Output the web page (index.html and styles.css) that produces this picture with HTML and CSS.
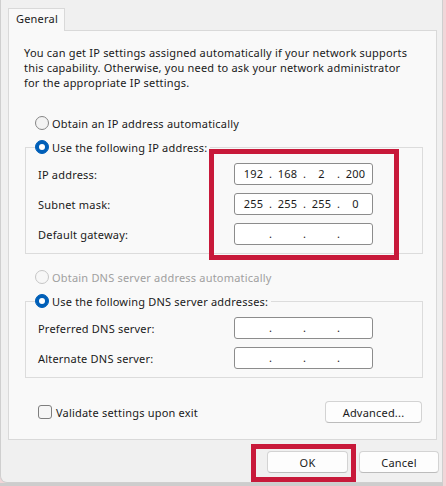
FILE: index.html
```html
<!DOCTYPE html>
<html lang="en">
<head>
<meta charset="utf-8">
<title>Internet Protocol Version 4 (TCP/IPv4) Properties</title>
<link rel="stylesheet" href="styles.css">
</head>
<body>
<div class="screen">
  <div class="window">
    <div class="dialog">
      <div class="tabs"><div class="tab">General</div></div>
      <div class="panel">
        <p class="intro">You can get IP settings assigned automatically if your network supports<br>this capability. Otherwise, you need to ask your network administrator<br>for the appropriate IP settings.</p>

        <div class="option first"><span class="radio"></span>Obtain an IP address automatically</div>

        <div class="group">
          <div class="group-head"><span class="radio on"></span>Use the following IP address:</div>
          <div class="field">
            <span class="label">IP address:</span>
            <span class="ip"><span>192</span><i>.</i><span>168</span><i>.</i><span>2</span><i>.</i><span>200</span></span>
          </div>
          <div class="field">
            <span class="label">Subnet mask:</span>
            <span class="ip"><span>255</span><i>.</i><span>255</span><i>.</i><span>255</span><i>.</i><span>0</span></span>
          </div>
          <div class="field">
            <span class="label">Default gateway:</span>
            <span class="ip"><span></span><i>.</i><span></span><i>.</i><span></span><i>.</i><span></span></span>
          </div>
        </div>

        <div class="option dns-auto disabled"><span class="radio"></span>Obtain DNS server address automatically</div>

        <div class="group dns">
          <div class="group-head"><span class="radio on"></span>Use the following DNS server addresses:</div>
          <div class="field">
            <span class="label">Preferred DNS server:</span>
            <span class="ip"><span></span><i>.</i><span></span><i>.</i><span></span><i>.</i><span></span></span>
          </div>
          <div class="field">
            <span class="label">Alternate DNS server:</span>
            <span class="ip"><span></span><i>.</i><span></span><i>.</i><span></span><i>.</i><span></span></span>
          </div>
        </div>

        <div class="bottom-row">
          <div class="check"><span class="box"></span>Validate settings upon exit</div>
          <button class="btn advanced">Advanced...</button>
        </div>
      </div>

      <div class="actions">
        <button class="btn ok">OK</button>
        <button class="btn cancel">Cancel</button>
      </div>
    </div>
    <div class="under"></div>
  </div>
  <div class="edge"></div>
</div>

<div class="mark mark-ip"></div>
<div class="mark mark-ok"></div>
</body>
</html>
```

FILE: styles.css
```css
* {
  box-sizing: border-box;
}

html,
body {
  margin: 0;
}

body {
  position: relative;
  width: 446px;
  height: 486px;
  overflow: hidden;
  font: 11px/15px "Noto Sans", sans-serif;
  letter-spacing: 0.2px;
  color: #1a1a1a;
  background: #f2d6d9;
}

.screen {
  display: flex;
  height: 486px;
}

.window {
  width: 443px;
  display: flex;
  flex-direction: column;
}

.dialog {
  height: 483px;
  background: #f0f0f0;
  border: 1px solid #cfcfcf;
  border-top: 0;
  border-bottom-left-radius: 7px;
  padding: 8px 0 0 7px;
}

.under {
  flex: 1;
  background: #cdcdcd;
}

.edge {
  flex: 1;
  background: #f2d6d9;
}

/* tab strip */
.tabs {
  display: flex;
}

.tab {
  position: relative;
  z-index: 1;
  width: 57px;
  height: 23px;
  margin-bottom: -1px;
  padding-left: 7px;
  border: 1px solid #d9d9d9;
  border-bottom: 0;
  background: #f9f9f9;
  line-height: 19px;
}

.panel {
  width: 429px;
  height: 410px;
  border: 1px solid #d9d9d9;
  background: #f9f9f9;
  padding: 14px 13px 0 15px;
}

.intro {
  margin: 0;
  white-space: nowrap;
}

/* radio options */
.option,
.group-head {
  display: flex;
  align-items: center;
  gap: 3px;
  height: 16px;
  white-space: nowrap;
}

.option {
  margin-left: 11px;
}

.option.first {
  margin-top: 25px;
}

.option.dns-auto {
  margin-top: 15px;
}

.disabled {
  color: #a0a0a0;
}

.radio {
  flex: none;
  position: relative;
  width: 14px;
  height: 14px;
  border-radius: 50%;
  border: 1px solid #858585;
  background: #f3f3f3;
}

.disabled .radio {
  border-color: #c6c6c6;
  background: #f7f7f7;
}

.radio.on {
  border-color: #005fb8;
  background: #005fb8;
}

.radio.on::after {
  content: "";
  position: absolute;
  left: 3px;
  top: 3px;
  width: 6px;
  height: 6px;
  border-radius: 50%;
  background: #fff;
}

/* group boxes */
.group {
  margin: 16px 0 0 1px;
  border: 1px solid #dcdcdc;
  padding: 0 0 8px 12px;
}

.group.dns {
  margin-top: 16px;
}

.group-head {
  width: max-content;
  margin: -9px 0 0 -3px;
  padding-right: 3px;
  background: #f9f9f9;
}

.field {
  display: flex;
  align-items: center;
  height: 22px;
  margin-top: 8px;
}

.label {
  width: 196px;
  flex: none;
}

.ip {
  display: grid;
  grid-template-columns: 29px 5px 29px 5px 29px 5px 29px;
  align-items: center;
  width: 139px;
  height: 22px;
  padding-left: 4px;
  border: 1px solid #8c8c8c;
  border-radius: 3px;
  background: #fff;
  text-align: center;
  line-height: 20px;
}

.ip i {
  font-style: normal;
}

/* checkbox + advanced */
.bottom-row {
  display: flex;
  align-items: center;
  justify-content: space-between;
  margin-top: 23px;
  padding-left: 14px;
}

.check {
  display: flex;
  align-items: center;
  gap: 4px;
}

.box {
  width: 14px;
  height: 14px;
  border: 1px solid #7e7e7e;
  border-radius: 3px;
  background: #f6f6f6;
}

.btn {
  display: flex;
  align-items: center;
  justify-content: center;
  height: 22px;
  padding: 0;
  border: 1px solid #d3d3d3;
  border-bottom-color: #bcbcbc;
  border-radius: 4px;
  background: #fdfdfd;
  font: inherit;
  letter-spacing: inherit;
  color: inherit;
}

.advanced {
  width: 97px;
  margin-right: 1px;
}

.actions {
  display: flex;
  justify-content: flex-end;
  gap: 11px;
  margin-top: 11px;
  padding-right: 3px;
}

.ok {
  width: 81px;
}

.cancel {
  width: 80px;
}

/* highlight frames drawn over the dialog */
.mark {
  position: absolute;
  border: 5px solid #c8193a;
}

.mark-ip {
  left: 209px;
  top: 149px;
  width: 190px;
  height: 111px;
}

.mark-ok {
  left: 251px;
  top: 444px;
  width: 105px;
  height: 38px;
}
```
